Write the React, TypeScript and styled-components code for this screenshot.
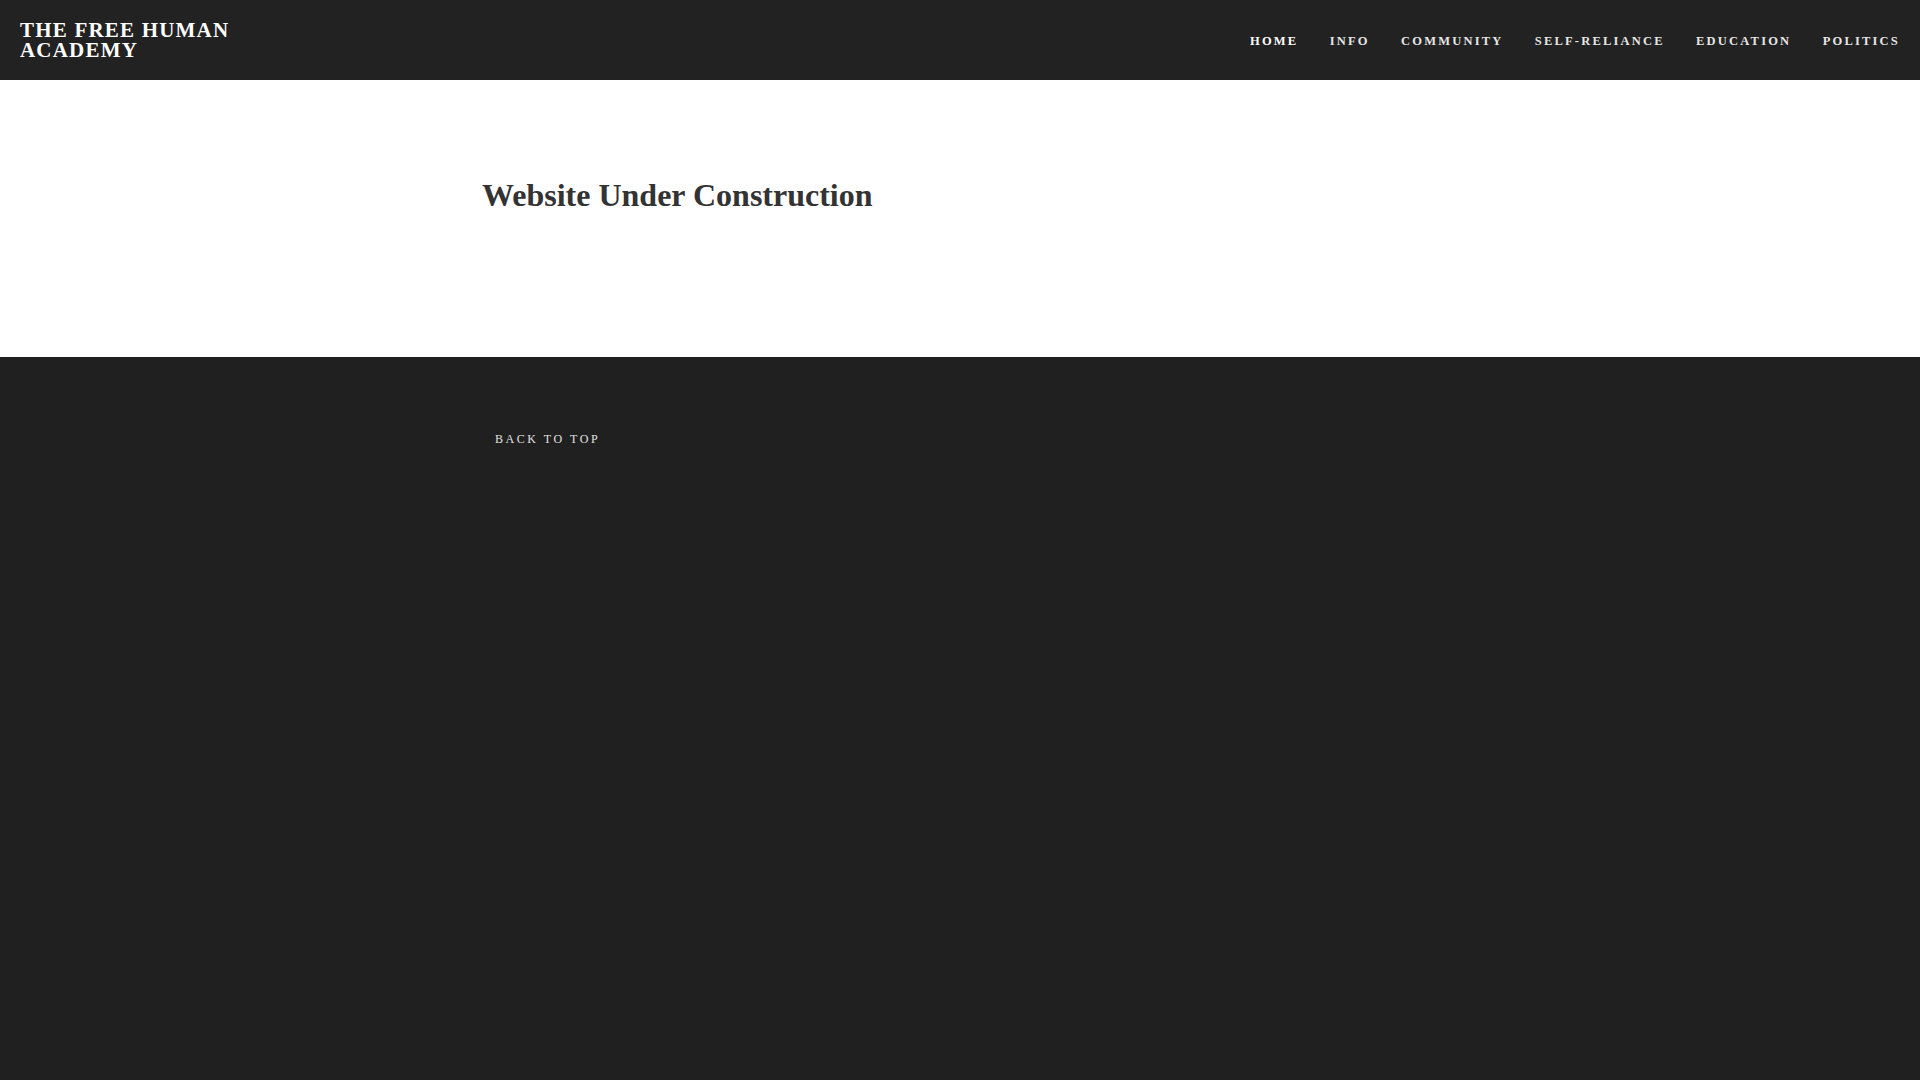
import styled, { createGlobalStyle } from "styled-components";

const GlobalStyle = createGlobalStyle`
  html, body {
    margin: 0;
    padding: 0;
    background-color: #202020;
    font-family: "Liberation Serif", "Times New Roman", serif;
  }
  #root {
    min-height: 100vh;
    display: flex;
    flex-direction: column;
  }
`

const Header = styled.header`
  height: 80px;
  box-sizing: border-box;
  padding: 0 20px;
  display: flex;
  align-items: center;
  justify-content: space-between;
  background-color: #222222;
`

const Logo = styled.a`
  width: 230px;
  color: #ffffff;
  font-size: 21px;
  font-weight: bold;
  line-height: 20.5px;
  letter-spacing: 1.2px;
  text-transform: uppercase;
  text-decoration: none;
`

const Nav = styled.nav`
  display: flex;
  align-items: center;
  gap: 31.3px;
  padding-top: 2px;
`

const NavLink = styled.a<{ $active?: boolean }>`
  color: ${(p) => (p.$active ? "#ffffff" : "#e6e6e6")};
  font-size: 12.5px;
  font-weight: bold;
  letter-spacing: 2.2px;
  text-transform: uppercase;
  text-decoration: none;
`

const Main = styled.main`
  height: 277px;
  background-color: #ffffff;
`

const Container = styled.div`
  width: 960px;
  margin: 0 auto;
`

const Title = styled.h1`
  margin: 0;
  padding-top: 96px;
  padding-left: 2px;
  color: #333333;
  font-size: 32px;
  font-weight: bold;
  line-height: 1.2;
`

const Footer = styled.footer`
  flex: 1;
  background-color: #202020;
`

const BackToTop = styled.a`
  display: inline-block;
  margin-top: 75px;
  margin-left: 15px;
  color: #e2e2e2;
  font-size: 12px;
  letter-spacing: 2.55px;
  text-transform: uppercase;
  text-decoration: none;
`

const links = ["Home", "Info", "Community", "Self-Reliance", "Education", "Politics"];

const App = () => {
  return (
    <>
      <GlobalStyle />
      <Header>
        <Logo href="#">The Free Human Academy</Logo>
        <Nav>
          {links.map((link, i) => (
            <NavLink key={link} href="#" $active={i === 0}>{link}</NavLink>
          ))}
        </Nav>
      </Header>
      <Main>
        <Container>
          <Title>Website Under Construction</Title>
        </Container>
      </Main>
      <Footer>
        <Container>
          <BackToTop href="#">Back to top</BackToTop>
        </Container>
      </Footer>
    </>
  )
}

export default App;
